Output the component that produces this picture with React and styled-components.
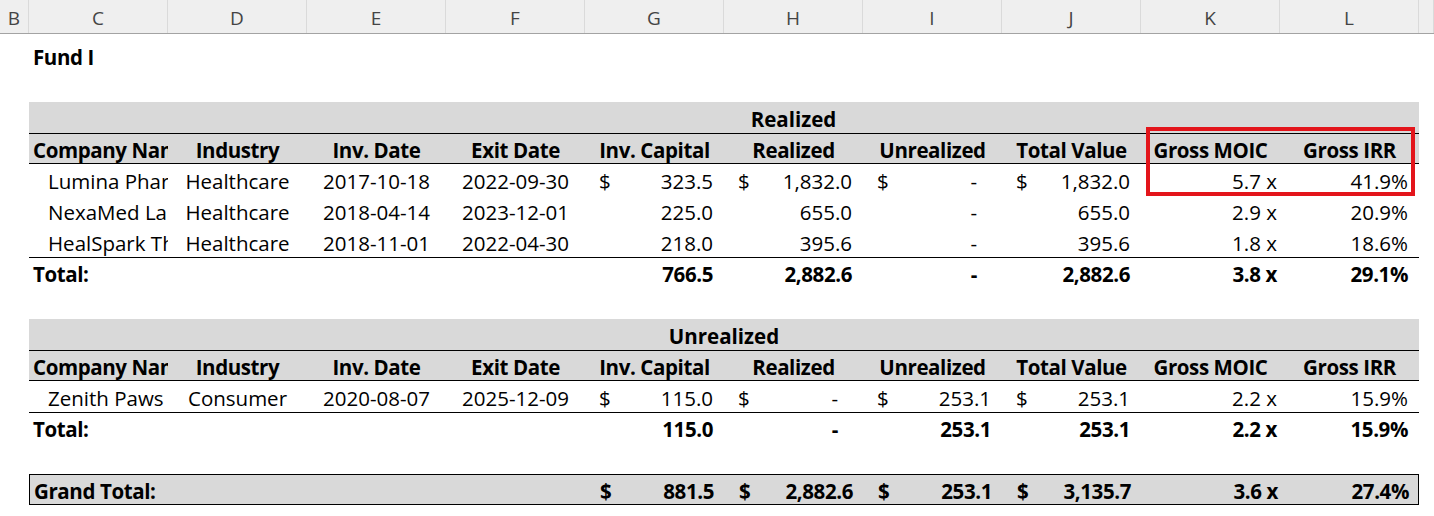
import styled, { createGlobalStyle } from 'styled-components';

const COLUMNS = ['C', 'D', 'E', 'F', 'G', 'H', 'I', 'J', 'K', 'L'];

const realizedRows = [
  { name: 'Lumina Pharma', industry: 'Healthcare', inv: '2017-10-18', exit: '2022-09-30', capital: '323.5', realized: '1,832.0', unrealized: '-', total: '1,832.0', moic: '5.7 x', irr: '41.9%', dollar: true },
  { name: 'NexaMed Labs', industry: 'Healthcare', inv: '2018-04-14', exit: '2023-12-01', capital: '225.0', realized: '655.0', unrealized: '-', total: '655.0', moic: '2.9 x', irr: '20.9%' },
  { name: 'HealSpark Therapeutics', industry: 'Healthcare', inv: '2018-11-01', exit: '2022-04-30', capital: '218.0', realized: '395.6', unrealized: '-', total: '395.6', moic: '1.8 x', irr: '18.6%' },
];

const unrealizedRows = [
  { name: 'Zenith Paws', industry: 'Consumer', inv: '2020-08-07', exit: '2025-12-09', capital: '115.0', realized: '-', unrealized: '253.1', total: '253.1', moic: '2.2 x', irr: '15.9%', dollar: true },
];

const headers = ['Company Name', 'Industry', 'Inv. Date', 'Exit Date', 'Inv. Capital', 'Realized', 'Unrealized', 'Total Value', 'Gross MOIC', 'Gross IRR'];

const MoneyCell = ({ value, dollar, bold }) => (
  <Money $bold={bold}>
    <span>{dollar ? '$' : ''}</span>
    {value === '-' ? <Dash>-</Dash> : <span>{value}</span>}
  </Money>
);

const HeaderRow = () => (
  <Row $fill $top $bottom>
    {headers.map((h, i) => (
      <Cell key={h} $bold $align={i === 0 ? 'left' : 'center'} $left={i === 0 ? 4 : 0}>
        {h}
      </Cell>
    ))}
  </Row>
);

const DataRow = ({ row }) => (
  <Row>
    <Cell $left={19}>{row.name}</Cell>
    <Cell $align="center">{row.industry}</Cell>
    <Cell $align="center">{row.inv}</Cell>
    <Cell $align="center">{row.exit}</Cell>
    <MoneyCell value={row.capital} dollar={row.dollar} />
    <MoneyCell value={row.realized} dollar={row.dollar} />
    <MoneyCell value={row.unrealized} dollar={row.dollar} />
    <MoneyCell value={row.total} dollar={row.dollar} />
    <Cell $align="right" $right={3}>{row.moic}</Cell>
    <Cell $align="right" $right={11}>{row.irr}</Cell>
  </Row>
);

const TotalRow = ({ label, t, grand }) => (
  <Row $top={!grand} $box={grand} $fill={grand}>
    <Cell $bold $left={4}>{label}</Cell>
    <Cell />
    <Cell />
    <Cell />
    <MoneyCell value={t.capital} dollar={grand} bold />
    <MoneyCell value={t.realized} dollar={grand} bold />
    <MoneyCell value={t.unrealized} dollar={grand} bold />
    <MoneyCell value={t.total} dollar={grand} bold />
    <Cell $bold $align="right" $right={3}>{t.moic}</Cell>
    <Cell $bold $align="right" $right={11}>{t.irr}</Cell>
  </Row>
);

export default function App() {
  return (
    <>
      <GlobalStyle />
      <Sheet>
        <ColumnBar>
          <ColHead $w={29}>B</ColHead>
          {COLUMNS.map((c) => (
            <ColHead key={c} $w={139}>{c}</ColHead>
          ))}
          <ColHead $w={15} />
        </ColumnBar>

        <Body>
          <Row>
            <Cell $bold $left={4}>Fund I</Cell>
          </Row>
          <Row />

          <Row $fill>
            <Title $col="6">Realized</Title>
          </Row>
          <HeaderRow />
          {realizedRows.map((r) => (
            <DataRow key={r.name} row={r} />
          ))}
          <TotalRow label="Total:" t={{ capital: '766.5', realized: '2,882.6', unrealized: '-', total: '2,882.6', moic: '3.8 x', irr: '29.1%' }} />
          <Row />

          <Row $fill>
            <Title $col="1 / -1">Unrealized</Title>
          </Row>
          <HeaderRow />
          {unrealizedRows.map((r) => (
            <DataRow key={r.name} row={r} />
          ))}
          <TotalRow label="Total:" t={{ capital: '115.0', realized: '-', unrealized: '253.1', total: '253.1', moic: '2.2 x', irr: '15.9%' }} />
          <Row />

          <TotalRow grand label="Grand Total:" t={{ capital: '881.5', realized: '2,882.6', unrealized: '253.1', total: '3,135.7', moic: '3.6 x', irr: '27.4%' }} />
        </Body>

        {/* highlight drawn over the sheet */}
        <Highlight />
      </Sheet>
    </>
  );
}

/* ============== styles ============== */

const GlobalStyle = createGlobalStyle`
  html, body {
    margin: 0;
    background: #fff;
  }
  body {
    font-family: "Open Sans", "Noto Sans", sans-serif;
    color: #000;
  }
`;

const Sheet = styled.div`
  position: relative;
  width: 1434px;
  height: 516px;
  overflow: hidden;
  background: #fff;
`;

const ColumnBar = styled.div`
  display: flex;
  height: 34px;
  box-sizing: border-box;
  background: #efefef;
  border-bottom: 1px solid #a3a3a3;
  margin-bottom: 6px;
`;

const ColHead = styled.div`
  width: ${({ $w }) => $w}px;
  flex-shrink: 0;
  box-sizing: border-box;
  border-right: 1px solid #dadada;
  display: flex;
  align-items: center;
  justify-content: center;
  padding-top: 3px;
  font-family: "Open Sans", "Noto Sans", sans-serif;
  font-size: 19px;
  color: #444;
`;

const Body = styled.div`
  padding-left: 29px;
`;

const Row = styled.div`
  display: grid;
  grid-template-columns: repeat(10, 139px);
  width: 1390px;
  height: 31px;
  box-sizing: border-box;
  background: ${({ $fill }) => ($fill ? '#d9d9d9' : 'transparent')};
  border-top: ${({ $top, $box }) => ($top || $box ? '1px solid #000' : 'none')};
  border-bottom: ${({ $bottom, $box }) => ($bottom || $box ? '1px solid #000' : 'none')};
  border-left: ${({ $box }) => ($box ? '1px solid #000' : 'none')};
  border-right: ${({ $box }) => ($box ? '1px solid #000' : 'none')};
`;

const Cell = styled.div`
  display: flex;
  align-items: center;
  justify-content: ${({ $align }) =>
    $align === 'center' ? 'center' : $align === 'right' ? 'flex-end' : 'flex-start'};
  padding: 2px ${({ $right }) => $right || 0}px 0 ${({ $left }) => $left || 0}px;
  min-width: 0;
  overflow: hidden;
  white-space: nowrap;
  font-size: 20.5px;
  letter-spacing: ${({ $bold }) => ($bold ? '-0.4px' : '0')};
  font-weight: ${({ $bold }) => ($bold ? 700 : 400)};
`;

const Title = styled(Cell)`
  grid-column: ${({ $col }) => $col};
  justify-content: center;
  font-weight: 700;
`;

const Money = styled.div`
  display: flex;
  align-items: center;
  justify-content: space-between;
  padding: 2px 11px 0 14px;
  white-space: nowrap;
  font-size: 20.5px;
  letter-spacing: ${({ $bold }) => ($bold ? '-0.4px' : '0')};
  font-weight: ${({ $bold }) => ($bold ? 700 : 400)};
`;

const Dash = styled.span`
  padding-right: 14px;
`;

const Highlight = styled.div`
  position: absolute;
  left: 1146px;
  top: 127px;
  width: 269px;
  height: 69px;
  box-sizing: border-box;
  border: 4px solid #e3151b;
  pointer-events: none;
`;
